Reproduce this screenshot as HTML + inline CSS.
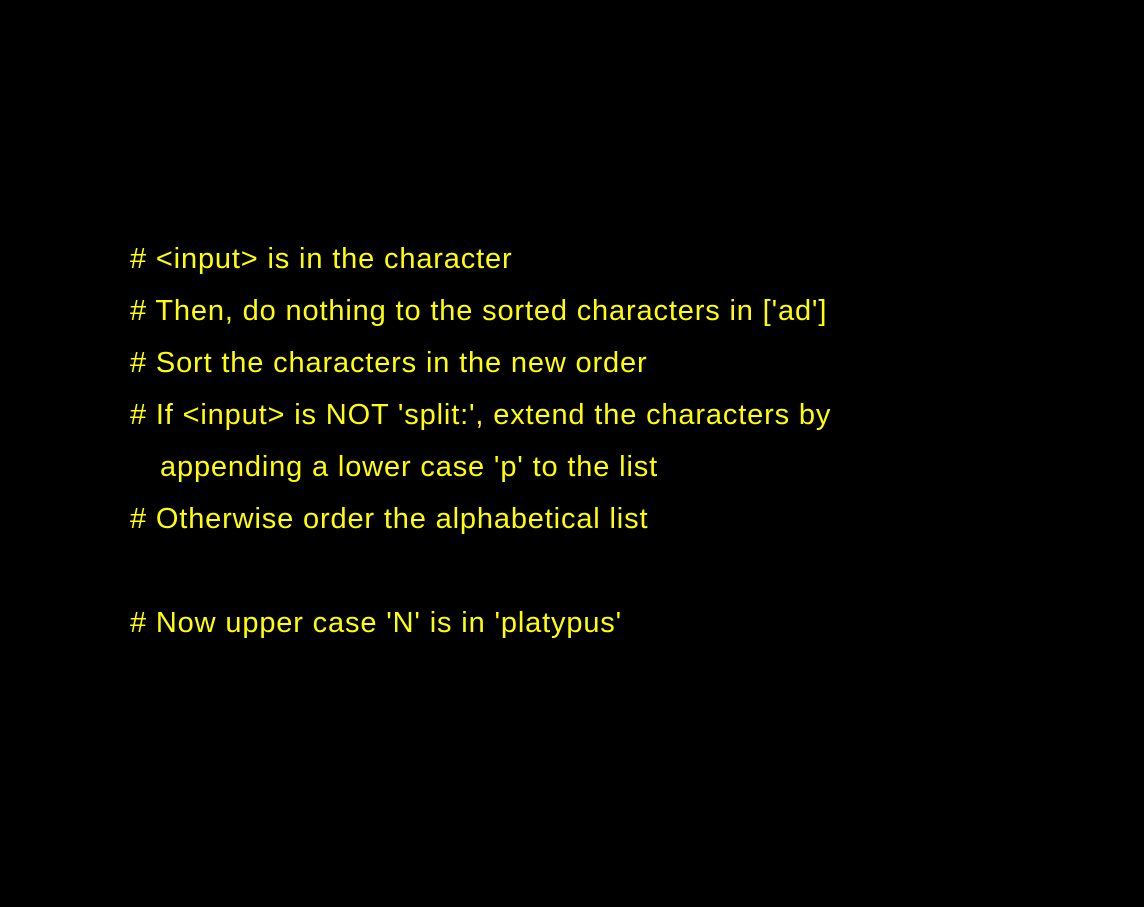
<!DOCTYPE html>
<html><head><meta charset="utf-8"><style>
html,body{margin:0;padding:0;background:#000;width:1144px;height:907px;overflow:hidden}
.t{position:absolute;left:130px;color:#ffff00;font-family:"Liberation Sans",sans-serif;font-size:29px;letter-spacing:0.85px;white-space:pre;line-height:30px}
</style></head><body>
<div class="t" style="top:244px"># &lt;input&gt; is in the character</div>
<div class="t" style="top:296px"># Then, do nothing to the sorted characters in ['ad']</div>
<div class="t" style="top:348px"># Sort the characters in the new order</div>
<div class="t" style="top:400px"># If &lt;input&gt; is NOT 'split:', extend the characters by</div>
<div class="t" style="top:452px;left:160px">appending a lower case 'p' to the list</div>
<div class="t" style="top:504px"># Otherwise order the alphabetical list</div>
<div class="t" style="top:608px"># Now upper case 'N' is in 'platypus'</div>
</body></html>
